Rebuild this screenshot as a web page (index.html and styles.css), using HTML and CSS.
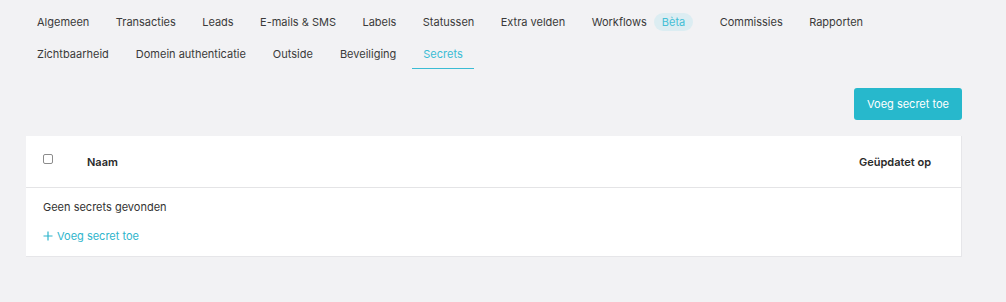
FILE: index.html
```html
<!DOCTYPE html>
<html lang="nl">
<head>
<meta charset="utf-8">
<title>Secrets</title>
<link rel="stylesheet" href="styles.css">
</head>
<body>
<div class="page">
  <nav class="tabs">
    <div class="tab-row">
      <a class="tab">Algemeen</a>
      <a class="tab">Transacties</a>
      <a class="tab">Leads</a>
      <a class="tab">E-mails &amp; SMS</a>
      <a class="tab">Labels</a>
      <a class="tab">Statussen</a>
      <a class="tab">Extra velden</a>
      <a class="tab">Workflows<span class="badge">Bèta</span></a>
      <a class="tab">Commissies</a>
      <a class="tab">Rapporten</a>
    </div>
    <div class="tab-row">
      <a class="tab">Zichtbaarheid</a>
      <a class="tab">Domein authenticatie</a>
      <a class="tab">Outside</a>
      <a class="tab">Beveiliging</a>
      <a class="tab active">Secrets</a>
    </div>
  </nav>
  <div class="toolbar">
    <button class="btn-primary">Voeg secret toe</button>
  </div>
  <div class="card">
    <div class="table-head">
      <span class="checkbox"></span>
      <span class="col-name">Naam</span>
      <span class="col-updated">Geüpdatet op</span>
    </div>
    <div class="table-body">
      <p class="empty">Geen secrets gevonden</p>
      <a class="add-link"><svg class="plus" width="10" height="10" viewBox="0 0 10 10"><path d="M5 0.5V9.5M0.5 5H9.5" stroke="currentColor" stroke-width="1.2" fill="none"/></svg>Voeg secret toe</a>
    </div>
  </div>
</div>
</body>
</html>
```

FILE: styles.css
```css
* { box-sizing: border-box; }
html, body {
  margin: 0;
  padding: 0;
  background: #f2f2f4;
  font-family: Inter, "Noto Sans", sans-serif;
  font-size: 11px;
  color: #333;
}
.page {
  padding: 7px 44px 0 26px;
}
.tabs {
  display: flex;
  flex-direction: column;
  gap: 2px;
}
.tab-row {
  display: flex;
  gap: 4.4px;
}
.tab-row + .tab-row {
  gap: 5px;
}
.tab {
  display: flex;
  align-items: center;
  height: 30px;
  padding: 0 11px;
  color: #3a3a3a;
  white-space: nowrap;
  border-bottom: 1px solid transparent;
}
.tab.active {
  color: #3bbcd4;
  border-bottom-color: #3bbcd4;
}
.badge {
  display: inline-flex;
  align-items: center;
  height: 18px;
  padding: 0 8px;
  margin-left: 7px;
  border-radius: 9px;
  background: #dcedf2;
  color: #45bfd6;
}
.toolbar {
  display: flex;
  justify-content: flex-end;
  margin-top: 19px;
}
.btn-primary {
  height: 32px;
  width: 108px;
  border: none;
  border-radius: 3px;
  background: #27b8cc;
  color: #fff;
  font-family: inherit;
  font-size: 11px;
  padding: 0;
}
.card {
  margin-top: 16px;
  background: #fff;
  border-right: 1px solid #e6e6e9;
  border-bottom: 1px solid #e6e6e9;
}
.table-head {
  display: flex;
  align-items: center;
  height: 52px;
  padding: 0 30px 0 17px;
  border-bottom: 1px solid #e4e4e6;
  font-weight: 600;
  color: #2a2a2a;
}
.checkbox {
  width: 10px;
  height: 10px;
  border: 1px solid #8c8c8c;
  border-radius: 2px;
  margin-top: -5px;
}
.col-name {
  margin-left: 34px;
  flex: 1;
}
.table-body {
  padding: 12px 17px 13px;
}
.empty {
  margin: 0;
  line-height: 14px;
  color: #333;
}
.add-link {
  display: flex;
  align-items: center;
  margin-top: 15px;
  color: #2eb5cc;
  line-height: 14px;
}
.plus {
  margin-right: 4px;
}
```
